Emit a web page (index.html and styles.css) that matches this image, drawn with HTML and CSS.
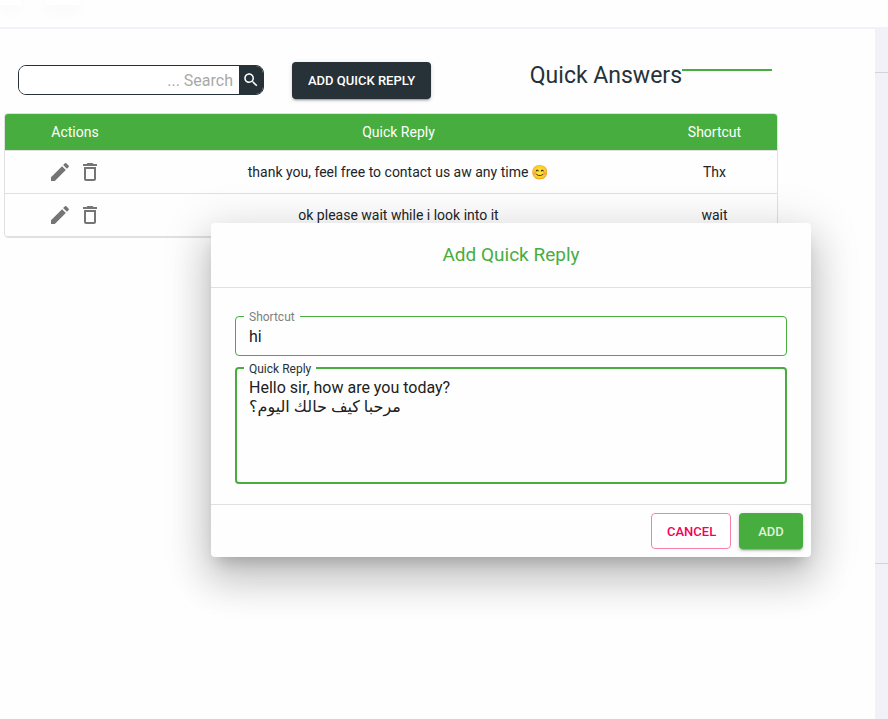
FILE: index.html
```html
<!DOCTYPE html>
<html lang="en">
<head>
<meta charset="utf-8">
<meta name="viewport" content="width=device-width, initial-scale=1">
<title>Quick Answers</title>
<link rel="stylesheet" href="styles.css">
</head>
<body>
<svg class="sprite" aria-hidden="true">
  <symbol id="pencil" viewBox="0 0 24 24"><path d="M3 17.25V21h3.75L17.81 9.94l-3.75-3.75L3 17.25zM20.71 7.04c.39-.39.39-1.02 0-1.41l-2.34-2.34a.9959.9959 0 0 0-1.41 0l-1.83 1.83 3.75 3.75 1.83-1.83z"/></symbol>
  <symbol id="trash" viewBox="0 0 24 24"><path d="M6 19c0 1.100.9 2 2 2h8c1.100 0 2-.9 2-2V7H6v12zM8 9h8v10H8V9zm7.500-5l-1-1h-5l-1 1H5v2h14V4z"/></symbol>
</svg>
<header class="topbar"><span class="tab tab-first"></span><span class="tab"></span></header>
<div class="shell">
  <main class="page">
    <div class="toolbar">
      <form class="search">
        <input type="text" placeholder="... Search" aria-label="Search">
        <button type="button" aria-label="Search"><svg viewBox="0 0 24 24"><path d="M15.5 14h-.79l-.28-.27C15.410 12.590 16 11.110 16 9.500 16 5.910 13.090 3 9.500 3S3 5.910 3 9.500 5.910 16 9.500 16c1.610 0 3.090-.59 4.230-1.570l.27.28v.79l5 4.990L20.490 19l-4.990-5zm-6 0C7.010 14 5 11.990 5 9.500S7.010 5 9.500 5 14 7.010 14 9.500 11.990 14 9.500 14z"/></svg></button>
      </form>
      <button type="button" class="btn btn-dark">ADD QUICK REPLY</button>
      <h1 class="heading">Quick Answers</h1>
    </div>
    <div class="table-card">
      <table>
        <thead><tr><th class="col-actions">Actions</th><th>Quick Reply</th><th class="col-shortcut">Shortcut</th></tr></thead>
        <tbody>
          <tr>
            <td><div class="actions"><button type="button" aria-label="Edit"><svg><use href="#pencil"/></svg></button><button type="button" aria-label="Delete"><svg><use href="#trash"/></svg></button></div></td>
            <td>thank you, feel free to contact us aw any time 😊</td>
            <td>Thx</td>
          </tr>
          <tr>
            <td><div class="actions"><button type="button" aria-label="Edit"><svg><use href="#pencil"/></svg></button><button type="button" aria-label="Delete"><svg><use href="#trash"/></svg></button></div></td>
            <td>ok please wait while i look into it</td>
            <td>wait</td>
          </tr>
        </tbody>
      </table>
    </div>
  </main>
  <aside class="rail"><div class="rail-card"></div></aside>
</div>
<section class="dialog" role="dialog" aria-labelledby="dialog-title">
  <h2 id="dialog-title">Add Quick Reply</h2>
  <div class="dialog-body">
    <div class="field">
      <label for="shortcut">Shortcut</label>
      <input id="shortcut" type="text" value="hi">
    </div>
    <div class="field field-active">
      <label for="reply">Quick Reply</label>
      <textarea id="reply" rows="5">Hello sir, how are you today?
مرحبا كيف حالك اليوم؟</textarea>
    </div>
  </div>
  <div class="dialog-actions">
    <button type="button" class="btn btn-outline">CANCEL</button>
    <button type="button" class="btn btn-green">ADD</button>
  </div>
</section>
</body>
</html>
```
FILE: styles.css
```css
:root {
  --green: #48ad3f;
  --dark: #263238;
  --line: #e0e0e0;
  --surface: #fefefe;
}

* { box-sizing: border-box; }

body {
  margin: 0;
  min-height: 100vh;
  display: flex;
  flex-direction: column;
  background: var(--surface);
  color: #212529;
  font-family: Roboto, "Noto Color Emoji", "DejaVu Sans", sans-serif;
  font-size: 14px;
}

button, input, textarea { font: inherit; }
.sprite { display: none; }

.topbar {
  display: flex;
  gap: 24px;
  height: 29px;
  overflow: hidden;
  border-bottom: 2px solid #f2f1f7;
}

.tab {
  width: 35px;
  height: 5px;
  background: #fff;
  box-shadow: 0 4px 14px rgba(0, 0, 0, 0.05);
}
.tab-first { width: 21px; }

.shell { flex: 1; display: flex; }
.page { flex: 1; padding: 33px 97px 0 4px; }

.rail {
  width: 13px;
  padding-top: 43px;
  background: #f2f1f7;
}
.rail-card {
  height: 492px;
  border: solid #d4d3d9;
  border-width: 1px 0;
}

.toolbar {
  display: flex;
  align-items: flex-start;
  gap: 28px;
  padding: 0 6px 0 14px;
}

.search {
  display: flex;
  width: 246px;
  height: 30px;
  margin: 3px 0 0;
  overflow: hidden;
  border: 1px solid var(--dark);
  border-radius: 8px;
}
.search input {
  flex: 1;
  min-width: 0;
  padding: 0 6px;
  border: 0;
  outline: 0;
  background: #fff;
  font-size: 16px;
  text-align: right;
}
.search input::placeholder { color: #a9a9a9; }
.search button {
  display: grid;
  place-items: center;
  width: 24px;
  padding: 0;
  border: 0;
  background: var(--dark);
}
.search svg { width: 18px; height: 18px; fill: #fff; }

.btn {
  height: 36px;
  padding: 0 15px;
  border: 1px solid transparent;
  border-radius: 4px;
  font-size: 13px;
  font-weight: 500;
  white-space: nowrap;
}
.btn-dark {
  height: 37px;
  background: var(--dark);
  color: #fff;
  box-shadow: 0 3px 1px -2px rgba(0, 0, 0, 0.2), 0 2px 2px rgba(0, 0, 0, 0.14), 0 1px 5px rgba(0, 0, 0, 0.12);
}
.btn-green {
  width: 64px;
  background: var(--green);
  color: #dff2dd;
  box-shadow: 0 3px 1px -2px rgba(0, 0, 0, 0.2), 0 2px 2px rgba(0, 0, 0, 0.14), 0 1px 5px rgba(0, 0, 0, 0.12);
}
.btn-outline {
  width: 80px;
  border-color: #fa80ab;
  background: #fff;
  color: #f50057;
}

.heading {
  display: flex;
  margin: 0 0 0 auto;
  color: var(--dark);
  font-size: 23px;
  font-weight: 400;
  line-height: 28px;
  white-space: nowrap;
}
.heading::after {
  content: "";
  width: 90px;
  height: 2px;
  margin-top: 7px;
  background: var(--green);
}

.table-card {
  margin-top: 14px;
  overflow: hidden;
  border: 1px solid var(--line);
  border-radius: 4px;
}
table {
  width: 100%;
  border-collapse: separate;
  border-spacing: 0;
  table-layout: fixed;
  text-align: center;
}
th, td {
  height: 43px;
  padding: 0;
  border-bottom: 1px solid var(--line);
}
th {
  height: 37px;
  background: var(--green);
  color: #fff;
  font-weight: 400;
}
.col-actions { width: 140px; }
.col-shortcut { width: 125px; }

.actions { display: flex; justify-content: center; gap: 6px; }
.actions button {
  display: flex;
  padding: 0;
  border: 0;
  background: none;
}
.actions svg { width: 24px; height: 24px; fill: #757575; }

.dialog {
  position: absolute;
  top: 223px;
  left: 211px;
  width: 600px;
  border-radius: 4px;
  background: var(--surface);
  box-shadow: 0 11px 15px -7px rgba(0, 0, 0, 0.2), 0 24px 38px 3px rgba(0, 0, 0, 0.14), 0 9px 46px 8px rgba(0, 0, 0, 0.12);
}
.dialog h2 {
  margin: 0;
  padding: 16px 24px;
  color: var(--green);
  font-size: 19px;
  font-weight: 400;
  line-height: 32px;
  text-align: center;
}
.dialog-body {
  display: grid;
  gap: 11px;
  padding: 28px 24px 20px;
  border: solid var(--line);
  border-width: 1px 0;
}

.field { position: relative; display: flex; }
.field label {
  position: absolute;
  top: -6px;
  left: 9px;
  padding: 0 5px;
  background: var(--surface);
  color: #808080;
  font-size: 12px;
  line-height: 14px;
}
.field-active label { top: -5px; color: var(--dark); }
.field input, .field textarea {
  width: 100%;
  height: 40px;
  padding: 0 13px;
  border: 1px solid var(--green);
  border-radius: 4px;
  outline: 0;
  background: transparent;
  color: #212121;
  font-size: 16px;
}
.field textarea {
  height: 117px;
  padding: 9px 12px;
  border-width: 2px;
  line-height: 19px;
  resize: none;
}

.dialog-actions {
  display: flex;
  justify-content: flex-end;
  gap: 8px;
  padding: 8px;
}
```
